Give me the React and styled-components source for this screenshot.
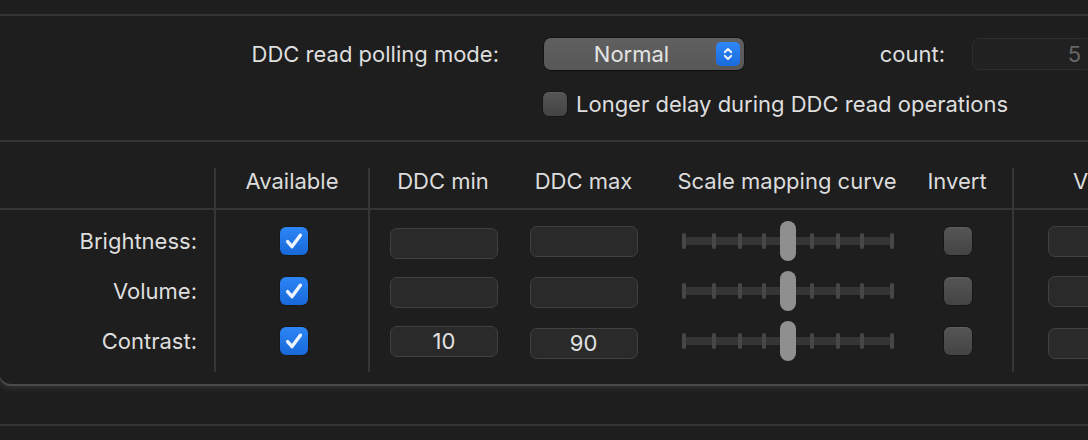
import React from 'react';
import styled, { createGlobalStyle } from 'styled-components';

const Global = createGlobalStyle`
  html, body { margin: 0; padding: 0; background: #1e1e1e; overflow: hidden; }
  body {
    font-family: Inter, "Noto Sans", sans-serif;
    font-size: 22px;
    color: #dedede;
    -webkit-font-smoothing: antialiased;
  }
`;

const Page = styled.div`
  width: 1088px;
  height: 440px;
  overflow: hidden;
  box-sizing: border-box;
  padding-top: 14px;
  display: flex;
  flex-direction: column;
`;

const Rule = styled.div`
  flex-shrink: 0;
  height: 2px;
  background: #333333;
  margin-top: ${(p) => p.$mt || 0}px;
`;

const Settings = styled.section`
  height: 124px;
  box-sizing: border-box;
  padding-top: 22px;
  display: flex;
  flex-direction: column;
  gap: 22px;
`;

const SettingRow = styled.div`
  display: flex;
  align-items: center;
  height: ${(p) => p.$h}px;
  padding-left: ${(p) => p.$indent || 0}px;
  line-height: 26px;
  white-space: nowrap;
`;

const FieldLabel = styled.span`
  flex-shrink: 0;
  width: ${(p) => p.$w}px;
  text-align: right;
`;

const PopUp = styled.div`
  flex-shrink: 0;
  box-sizing: border-box;
  width: 200px;
  height: 32px;
  margin-left: 45px;
  padding-right: 4px;
  border-radius: 7px;
  background: linear-gradient(#606060, #575757);
  box-shadow: 0 0 0 0.5px rgba(0, 0, 0, 0.6), 0 1px 1px rgba(0, 0, 0, 0.35);
  display: flex;
  align-items: center;
`;

const PopUpText = styled.span`
  flex: 1;
  text-align: center;
  padding-left: 3px;
  color: #e4e4e4;
`;

const Stepper = styled.span`
  width: 24px;
  height: 24px;
  border-radius: 5px;
  background: linear-gradient(#2e88f8, #1a6bdc);
  display: flex;
  align-items: center;
  justify-content: center;
`;

const CountField = styled.div`
  flex-shrink: 0;
  box-sizing: border-box;
  width: 120px;
  height: 32px;
  margin-left: 27px;
  padding-right: 10px;
  border-radius: 7px;
  background: #212121;
  border: 1px solid #2e2e2e;
  color: #676767;
  display: flex;
  align-items: center;
  justify-content: flex-end;
`;

const Check = styled.span`
  flex-shrink: 0;
  box-sizing: border-box;
  width: ${(p) => p.$size}px;
  height: ${(p) => p.$size}px;
  border-radius: 6px;
  display: flex;
  align-items: center;
  justify-content: center;
  background: ${(p) =>
    p.$on ? 'linear-gradient(#2d86f6, #1868d8)' : 'linear-gradient(#555555, #444444)'};
  box-shadow: ${(p) =>
    p.$on
      ? '0 0 0 0.5px rgba(0,0,0,0.4)'
      : 'inset 0 1px 0 rgba(255,255,255,0.06), 0 0 0 0.5px rgba(0,0,0,0.5)'};
`;

const CheckLabel = styled.span`
  margin-left: 9px;
`;

const Panel = styled.section`
  flex-shrink: 0;
  margin-left: -1px;
  padding: 26px 0 12px 1px;
  border-bottom-left-radius: 12px;
  box-shadow: 0 2px 0 #4a4a4a, 0 4px 6px rgba(130, 130, 130, 0.22);
  display: flex;
  overflow: hidden;
`;

const Column = styled.div`
  flex: ${(p) => (p.$w ? `0 0 ${p.$w}px` : '1 1 auto')};
  min-width: 0;
  box-sizing: border-box;
  border-left: ${(p) => (p.$divider ? '2px solid #363636' : '0')};
  padding-bottom: 6px;
  display: flex;
  flex-direction: column;
`;

const HeaderCell = styled.div`
  height: 40px;
  border-bottom: 2px solid #363636;
  line-height: 26px;
  white-space: nowrap;
  overflow: hidden;
  text-align: ${(p) => (p.$indent ? 'left' : 'center')};
  padding-left: ${(p) => p.$indent || 0}px;
  color: #dcdcdc;
`;

const CellStack = styled.div`
  padding-top: 6px;
  display: flex;
  flex-direction: column;
`;

const Cell = styled.div`
  height: 50px;
  box-sizing: border-box;
  display: flex;
  align-items: center;
  justify-content: ${(p) => p.$justify || 'center'};
  padding-left: ${(p) => p.$pl || 0}px;
  padding-right: ${(p) => p.$pr || 0}px;
  line-height: 26px;
  white-space: nowrap;
`;

const NumberField = styled.div`
  flex-shrink: 0;
  box-sizing: border-box;
  width: 108px;
  height: 31px;
  border-radius: 7px;
  background: #2a2a2a;
  border: 1px solid #414141;
  color: #e2e2e2;
  display: flex;
  align-items: center;
  justify-content: center;
  transform: translateY(${(p) => p.$dy || 0}px);
`;

const Chevrons = () => (
  <svg width="24" height="24" viewBox="0 0 24 24" fill="none">
    <path d="M8.8 10.2 L12 7 L15.2 10.2" stroke="#fff" strokeWidth="1.9" strokeLinecap="round" strokeLinejoin="round" />
    <path d="M8.8 13.8 L12 17 L15.2 13.8" stroke="#fff" strokeWidth="1.9" strokeLinecap="round" strokeLinejoin="round" />
  </svg>
);

const Tick = () => (
  <svg width="28" height="28" viewBox="0 0 28 28" fill="none">
    <path d="M7.6 14.6 L12 19.6 L20.4 8.2" stroke="#eef4ff" strokeWidth="3.4" strokeLinecap="round" strokeLinejoin="round" />
  </svg>
);

const TICKS = [2, 32, 58, 82, 106, 130, 156, 180, 210];

const Slider = ({ value }) => {
  const knobX = 8 + value * 196 - 8;
  return (
    <svg width="212" height="40" viewBox="0 0 212 40">
      <rect x="0" y="16" width="212" height="8" rx="4" fill="#353535" />
      {TICKS.map((t) => (
        <rect key={t} x={t - 2} y="12" width="4" height="16" rx="2" fill="#474747" />
      ))}
      <rect x={knobX} y="0" width="16" height="40" rx="8" fill="#8f8f8f" />
    </svg>
  );
};

const rows = [
  { name: 'Brightness:', min: '', max: '', dyMin: 2, dyMax: 0 },
  { name: 'Volume:', min: '', max: '', dyMin: 1, dyMax: 1 },
  { name: 'Contrast:', min: '10', max: '90', dyMin: 0, dyMax: 2 },
];

export default function App() {
  return (
    <Page>
      <Global />
      <Rule />
      <Settings>
        <SettingRow $h={32}>
          <FieldLabel $w={499}>DDC read polling mode:</FieldLabel>
          <PopUp>
            <PopUpText>Normal</PopUpText>
            <Stepper>
              <Chevrons />
            </Stepper>
          </PopUp>
          <FieldLabel $w={201}>count:</FieldLabel>
          <CountField>5</CountField>
        </SettingRow>
        <SettingRow $h={24} $indent={543}>
          <Check $size={24} />
          <CheckLabel>Longer delay during DDC read operations</CheckLabel>
        </SettingRow>
      </Settings>
      <Rule />
      <Panel>
        <Column $w={214}>
          <HeaderCell />
          <CellStack>
            {rows.map((r) => (
              <Cell key={r.name} $justify="flex-end" $pr={17}>
                {r.name}
              </Cell>
            ))}
          </CellStack>
        </Column>
        <Column $w={154} $divider>
          <HeaderCell>Available</HeaderCell>
          <CellStack>
            {rows.map((r) => (
              <Cell key={r.name} $pl={3}>
                <Check $size={28} $on>
                  <Tick />
                </Check>
              </Cell>
            ))}
          </CellStack>
        </Column>
        <Column $w={148} $divider>
          <HeaderCell>DDC min</HeaderCell>
          <CellStack>
            {rows.map((r) => (
              <Cell key={r.name} $pl={2}>
                <NumberField $dy={r.dyMin}>{r.min}</NumberField>
              </Cell>
            ))}
          </CellStack>
        </Column>
        <Column $w={135}>
          <HeaderCell>DDC max</HeaderCell>
          <CellStack>
            {rows.map((r) => (
              <Cell key={r.name}>
                <NumberField $dy={r.dyMax}>{r.max}</NumberField>
              </Cell>
            ))}
          </CellStack>
        </Column>
        <Column $w={272}>
          <HeaderCell>Scale mapping curve</HeaderCell>
          <CellStack>
            {rows.map((r) => (
              <Cell key={r.name} $pl={2}>
                <Slider value={0.5} />
              </Cell>
            ))}
          </CellStack>
        </Column>
        <Column $w={68}>
          <HeaderCell>Invert</HeaderCell>
          <CellStack>
            {rows.map((r) => (
              <Cell key={r.name} $pl={2}>
                <Check $size={28} />
              </Cell>
            ))}
          </CellStack>
        </Column>
        <Column $w={21}>
          <HeaderCell />
          <CellStack>
            {rows.map((r) => (
              <Cell key={r.name} />
            ))}
          </CellStack>
        </Column>
        <Column $divider>
          <HeaderCell $indent={59}>VCP code</HeaderCell>
          <CellStack>
            {rows.map((r, i) => (
              <Cell key={r.name} $justify="flex-start" $pl={34}>
                <NumberField $dy={i === 2 ? 2 : 0} />
              </Cell>
            ))}
          </CellStack>
        </Column>
      </Panel>
      <Rule $mt={40} />
    </Page>
  );
}
